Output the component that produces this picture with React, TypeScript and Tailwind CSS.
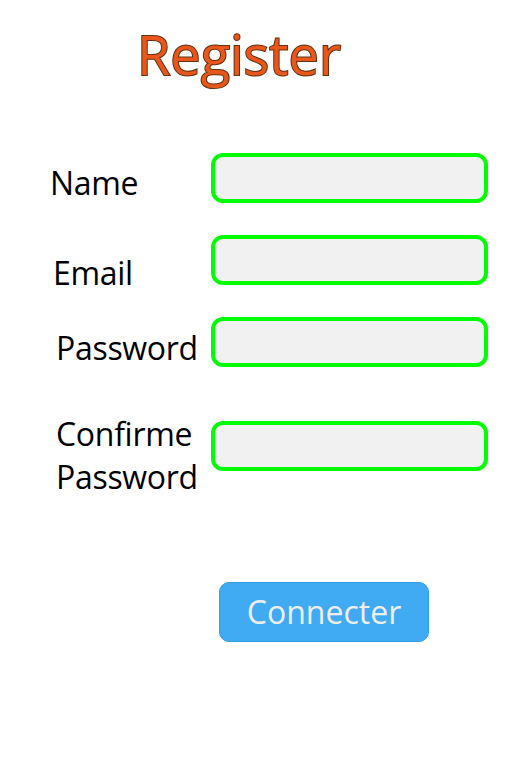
import React from "react";

const fields = [
  { label: "Name", row: "mt-[72px]", label_: "pl-[50px] mt-[10px]" },
  { label: "Email", row: "mt-[32px]", label_: "pl-[53px] mt-[18px]" },
  { label: "Password", row: "mt-[24px]", label_: "pl-[56px] mt-[11px]" },
];

export default function App() {
  return (
    <div className="w-[512px] h-[768px] bg-white font-['Open_Sans',sans-serif] text-black">
      <h1 className="pl-[137px] pt-[27px] text-[54px] leading-[54px] font-normal text-[#e8561b] [-webkit-text-stroke:2px_#5e3413] [paint-order:stroke_fill]">
        Register
      </h1>

      {fields.map((f) => (
        <div key={f.label} className={`flex items-start ${f.row}`}>
          <label className={`w-[211px] text-[32px] leading-[40px] tracking-[-0.3px] ${f.label_}`}>{f.label}</label>
          <input className="w-[277px] h-[50px] rounded-[12px] border-4 border-[#00ff00] bg-[#f1f1f1] outline-none" />
        </div>
      ))}

      <div className="flex items-start mt-[44px]">
        <label className="w-[211px] pl-[56px] text-[32px] leading-[43px] tracking-[-0.3px]">
          Confirme
          <br />
          Password
        </label>
        <input className="mt-[9px] w-[277px] h-[50px] rounded-[12px] border-4 border-[#00ff00] bg-[#f1f1f1] outline-none" />
      </div>

      <div className="pl-[219px] mt-[84px]">
        <button className="w-[210px] h-[60px] rounded-[10px] bg-[#40aaf3] border border-[#2fa0e8] text-[32px] font-medium text-[#eeeeee] leading-none">
          Connecter
        </button>
      </div>
    </div>
  );
}
